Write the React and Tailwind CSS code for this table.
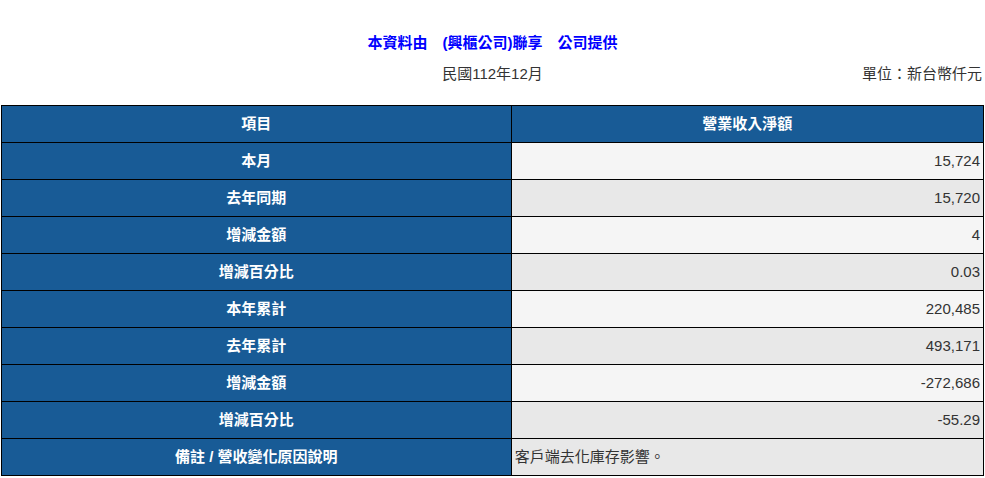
import React from 'react';

const rows = [
  ['本月', '15,724'],
  ['去年同期', '15,720'],
  ['增減金額', '4'],
  ['增減百分比', '0.03'],
  ['本年累計', '220,485'],
  ['去年累計', '493,171'],
  ['增減金額', '-272,686'],
  ['增減百分比', '-55.29'],
];

const font = { fontFamily: 'Arial, "Liberation Sans", "Noto Sans CJK TC", sans-serif' };

export default function App() {
  return (
    <div className="min-h-[478px] bg-white pt-[33px] text-[15px] text-[#333]" style={font}>
      <div className="text-center text-[15px] leading-[20px] font-bold text-[#0000ff]">
        本資料由　(興櫃公司)聯享　公司提供
      </div>
      <div className="relative mt-[10px] h-[22px] px-[3px] leading-[22px]">
        <div className="text-center">民國112年12月</div>
        <div className="absolute right-[3px] top-0">單位：新台幣仟元</div>
      </div>
      <div className="mt-[20px] px-[1px]">
        <table className="w-full border-collapse">
          <thead>
            <tr className="h-[37px] bg-[#185b96] font-bold text-white">
              <th className="w-[51.9%] border border-black">項目</th>
              <th className="border border-black">營業收入淨額</th>
            </tr>
          </thead>
          <tbody>
            {rows.map(([label, value], i) => (
              <tr key={i} className="h-[37px]">
                <td className="border border-black bg-[#185b96] text-center font-bold text-white">{label}</td>
                <td className={`border border-black px-[3px] text-right ${i % 2 === 0 ? 'bg-[#f5f5f5]' : 'bg-[#e8e8e8]'}`}>
                  {value}
                </td>
              </tr>
            ))}
            <tr className="h-[37px]">
              <td className="border border-black bg-[#185b96] text-center font-bold text-white">備註 / 營收變化原因說明</td>
              <td className="border border-black bg-[#e8e8e8] px-[3px] text-left">客戶端去化庫存影響。</td>
            </tr>
          </tbody>
        </table>
      </div>
    </div>
  );
}
